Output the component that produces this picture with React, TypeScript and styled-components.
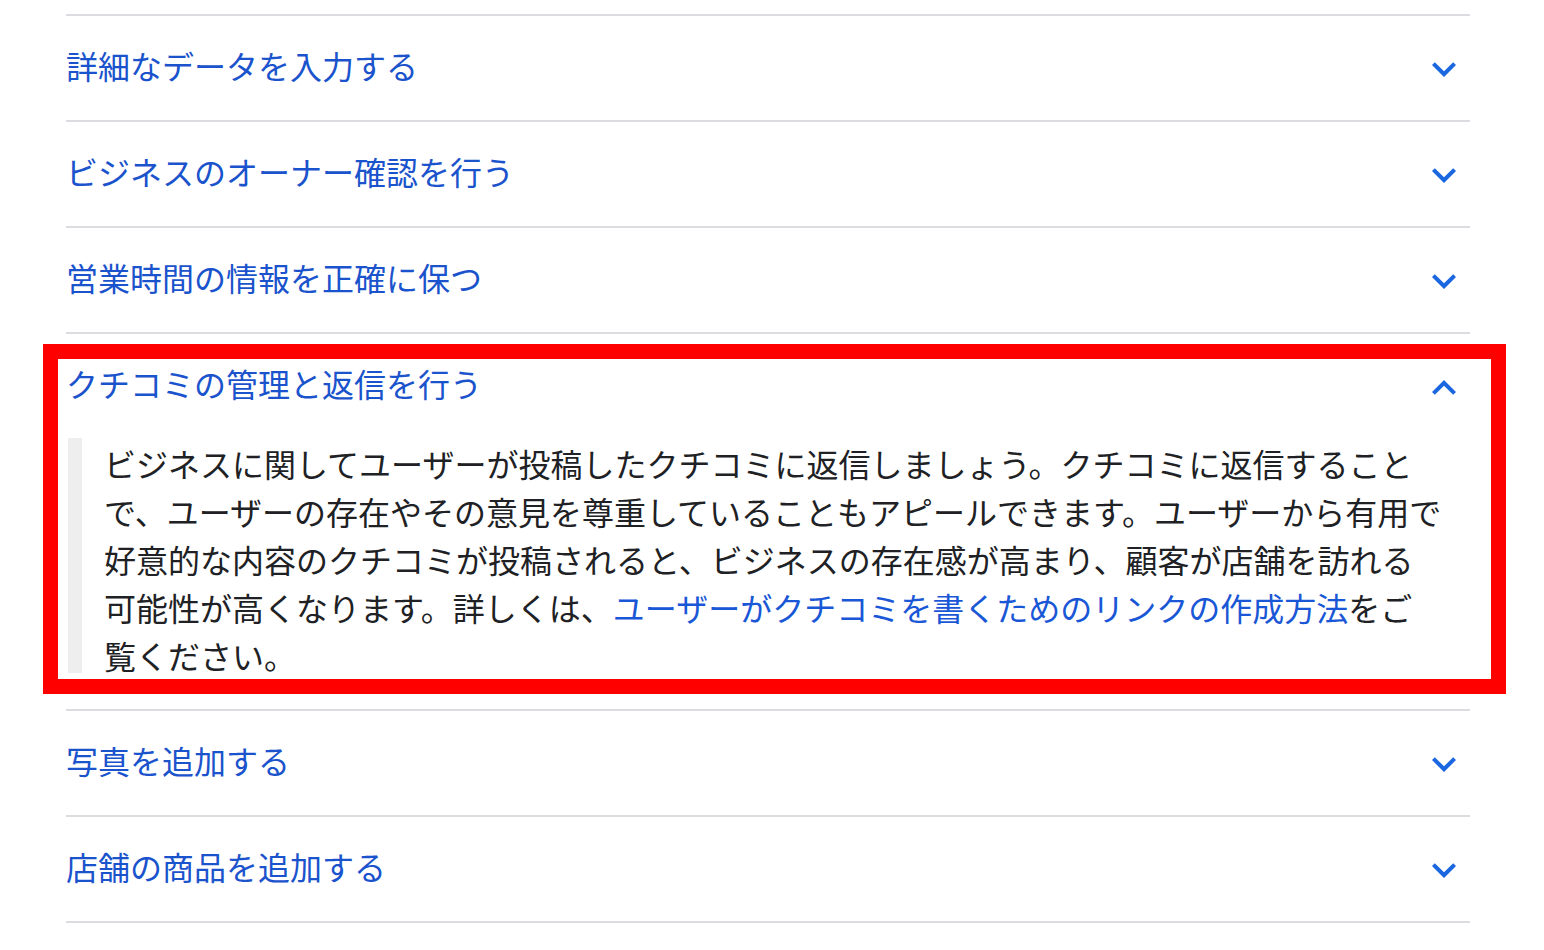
import React, { useState } from 'react';
import styled, { createGlobalStyle } from 'styled-components';

const GlobalStyle = createGlobalStyle`
  html, body {
    margin: 0;
    padding: 0;
    background: #ffffff;
  }
  body {
    font-family: "Noto Sans CJK JP", "Noto Sans", sans-serif;
  }
`;

const Page = styled.div`
  padding: 14px 74px 40px 66px;
`;

const List = styled.div`
  width: 1404px;
  border-bottom: 2px solid #dadce0;
`;

const Item = styled.section<{ $highlight?: boolean }>`
  position: relative;
  border-top: 2px solid #dadce0;

  &::after {
    content: '';
    display: ${(p) => (p.$highlight ? 'block' : 'none')};
    position: absolute;
    top: 10px;
    left: -23px;
    right: -36px;
    bottom: 15px;
    border: 15px solid #ff0000;
    pointer-events: none;
  }
`;

const Header = styled.button`
  display: flex;
  align-items: center;
  justify-content: space-between;
  width: 100%;
  height: 104px;
  padding: 0;
  border: 0;
  background: none;
  cursor: pointer;
  text-align: left;
`;

const Title = styled.h3`
  margin: 0;
  padding-bottom: 6px;
  font-family: "Noto Sans CJK JP", "Noto Sans", sans-serif;
  font-size: 32px;
  font-weight: 400;
  line-height: 44px;
  color: #1a53cc;
`;

const Chevron = styled.svg<{ $open?: boolean }>`
  width: 48px;
  height: 48px;
  margin-right: 2px;
  margin-top: ${(p) => (p.$open ? '4px' : '2px')};
  fill: #1a67e0;
  flex-shrink: 0;
`;

const Body = styled.div`
  padding: 0 0 30px 2px;
`;

const Quote = styled.blockquote`
  margin: 0;
  padding: 1px 0 0 36px;
  background: linear-gradient(#eeeeee, #eeeeee) no-repeat left top / 14px calc(100% - 6px);
  font-size: 32px;
  line-height: 48px;
  color: #202124;
`;

const Link = styled.a`
  color: #1a57d6;
  text-decoration: none;
`;

const items = [
  '詳細なデータを入力する',
  'ビジネスのオーナー確認を行う',
  '営業時間の情報を正確に保つ',
  'クチコミの管理と返信を行う',
  '写真を追加する',
  '店舗の商品を追加する',
];

const ExpandMore = () => (
  <Chevron viewBox="0 0 24 24">
    <path d="M16.59 8.59L12 13.17 7.41 8.59 6 10l6 6 6-6z" />
  </Chevron>
);

const ExpandLess = () => (
  <Chevron viewBox="0 0 24 24" $open>
    <path d="M12 8l-6 6 1.41 1.41L12 10.83l4.59 4.58L18 14z" />
  </Chevron>
);

export default function App() {
  const [open, setOpen] = useState(3);

  return (
    <>
      <GlobalStyle />
      <Page>
        <List>
          {items.map((title, i) => (
            <Item key={title} $highlight={i === 3 && open === 3}>
              <Header onClick={() => setOpen(open === i ? -1 : i)}>
                <Title>{title}</Title>
                {open === i ? <ExpandLess /> : <ExpandMore />}
              </Header>
              {open === i && i === 3 && (
                <Body>
                  <Quote>
                    ビジネスに関してユーザーが投稿したクチコミに返信しましょう。クチコミに返信すること
                    <br />
                    で、ユーザーの存在やその意見を尊重していることもアピールできます。ユーザーから有用で
                    <br />
                    好意的な内容のクチコミが投稿されると、ビジネスの存在感が高まり、顧客が店舗を訪れる
                    <br />
                    可能性が高くなります。詳しくは、
                    <Link href="#">ユーザーがクチコミを書くためのリンクの作成方法</Link>
                    をご
                    <br />
                    覧ください。
                  </Quote>
                </Body>
              )}
            </Item>
          ))}
        </List>
      </Page>
    </>
  );
}
